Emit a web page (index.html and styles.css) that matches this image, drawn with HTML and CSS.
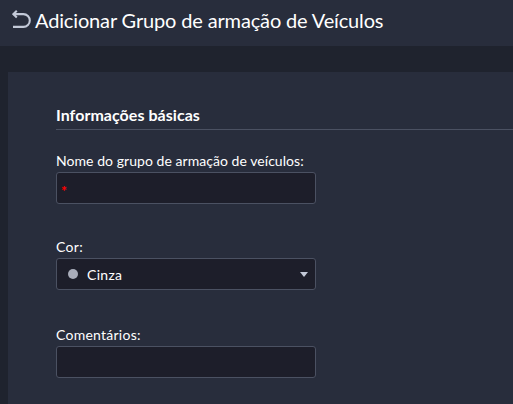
FILE: index.html
```html
<!DOCTYPE html>
<html lang="pt-BR">
<head>
  <meta charset="UTF-8" />
  <meta name="viewport" content="width=device-width, initial-scale=1" />
  <title>Adicionar Grupo de armação de Veículos</title>
  <link rel="stylesheet" href="styles.css">
</head>
<body>
  <header class="page-header">
    <a class="back-link" href="#" aria-label="Voltar">
      <svg width="20" height="20" viewBox="0 0 20 20" fill="none" stroke="currentColor" stroke-width="2.1">
        <path d="M1.5 5.1H11.4a6.4 6.4 0 0 1 0 12.8H1" />
        <path d="M4.8 1.7L1.4 5.1l3.4 3.3" />
      </svg>
    </a>
    <h1>Adicionar Grupo de armação de Veículos</h1>
  </header>

  <main class="card">
    <h2 class="section-title">Informações básicas</h2>

    <form class="form">
      <div class="field">
        <label for="nome">Nome do grupo de armação de veículos:</label>
        <div class="input-box">
          <span class="required">*</span>
          <input type="text" id="nome" />
        </div>
      </div>

      <div class="field field-color">
        <span class="label">Cor:</span>
        <div class="input-box select-box">
          <span class="color-dot"></span>
          <span class="select-value">Cinza</span>
          <span class="caret"></span>
        </div>
      </div>

      <div class="field field-comments">
        <label for="comentarios">Comentários:</label>
        <div class="input-box">
          <input type="text" id="comentarios" />
        </div>
      </div>
    </form>
  </main>
</body>
</html>
```

FILE: styles.css
```css
* {
  box-sizing: border-box;
}

html, body {
  height: 100%;
  margin: 0;
}

body {
  display: flex;
  flex-direction: column;
  overflow: hidden;
  background-color: #1f232e;
  color: #fff;
  font-family: Lato, sans-serif;
  font-size: 14px;
}

/* Header */
.page-header {
  flex: none;
  display: flex;
  height: 46px;
  padding: 9px 12px 0;
  gap: 4px;
  background-color: #282d3c;
}
.page-header h1 {
  margin: 0;
  font-size: 20px;
  font-weight: 400;
  letter-spacing: -0.15px;
  line-height: 22px;
  white-space: nowrap;
}
.back-link {
  width: 19px;
  height: 20px;
  color: #c3c9d8;
}
.back-link svg {
  display: block;
}

/* Card */
.card {
  flex: 1;
  margin: 26px 0 0 8px;
  padding: 32px 0 0 48px;
  background-color: #282d3c;
}
.section-title {
  height: 26px;
  margin: 0 0 22px;
  border-bottom: 1px solid #4b5162;
  font-size: 16px;
  font-weight: 700;
  letter-spacing: 0.04px;
  line-height: 22px;
}

/* Fields */
.field {
  width: 260px;
  margin-bottom: 34px;
  letter-spacing: 0.05px;
}
.field-color {
  margin-bottom: 36px;
  letter-spacing: 0.3px;
}
.field-comments {
  letter-spacing: 0.25px;
}
.field label,
.field .label {
  display: block;
  height: 20px;
  line-height: 18px;
  white-space: nowrap;
}
.input-box {
  display: flex;
  align-items: center;
  height: 32px;
  border: 1px solid #4b5162;
  border-radius: 3px;
  background-color: #1d1e2a;
}
.input-box input {
  flex: 1;
  min-width: 0;
  padding: 0 6px;
  border: none;
  outline: none;
  background: transparent;
  color: inherit;
  font: inherit;
}
.required {
  padding: 6px 0 0 4px;
  color: #f00;
  font-size: 14px;
  font-weight: 900;
  line-height: 16px;
}
.select-box {
  padding: 0 7px 0 11px;
}
.color-dot {
  width: 10px;
  height: 10px;
  border-radius: 50%;
  background-color: #a9adba;
}
.select-value {
  flex: 1;
  padding: 1px 0 0 9px;
  line-height: 17px;
}
.caret {
  border: 4px solid transparent;
  border-top: 5px solid #c3c9d8;
  border-bottom: none;
}
```
